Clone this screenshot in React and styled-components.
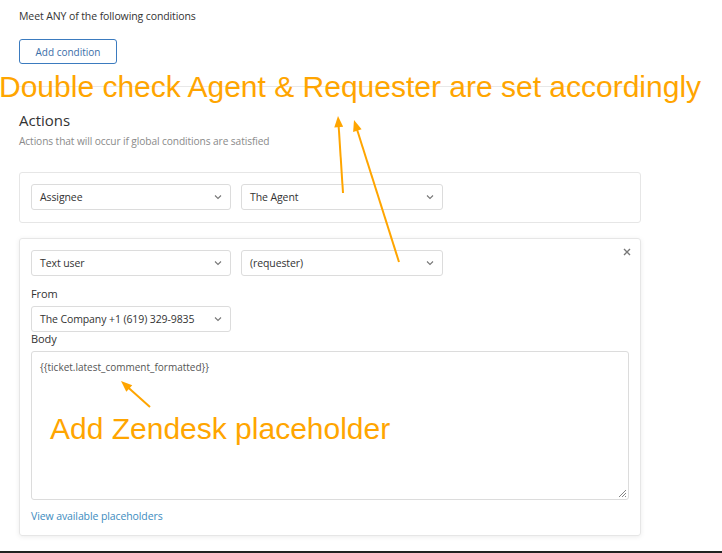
import React from 'react';
import styled, { createGlobalStyle } from 'styled-components';

const GlobalStyle = createGlobalStyle`
  html, body {
    margin: 0;
    padding: 0;
    background: #fff;
  }
  body {
    font-family: 'Open Sans', 'Noto Sans', sans-serif;
    color: #333;
  }
`;

const Screen = styled.div`
  position: relative;
  width: 722px;
  height: 553px;
  overflow: hidden;
`;

const Page = styled.div`
  width: 622px;
  padding: 9px 0 0 19px;
`;

const SmallText = styled.div`
  font-size: 10.5px;
  line-height: 14px;
  color: ${(props) => props.color || '#333'};
  letter-spacing: -0.1px;
`;

const OutlineButton = styled.button`
  display: block;
  margin-top: 16px;
  width: 98px;
  height: 25px;
  border: 1px solid #3b7bbf;
  border-radius: 3px;
  background: #fff;
  color: #3b6ea8;
  font-family: inherit;
  font-size: 10px;
  padding: 0;
`;

const Divider = styled.hr`
  margin: 22px 0 0;
  border: 0;
  border-top: 1px solid #e8e8e8;
`;

const SectionTitle = styled.h2`
  margin: 23px 0 0;
  font-size: 15px;
  line-height: 20px;
  font-weight: 400;
  color: #333;
`;

const Subtitle = styled(SmallText)`
  margin-top: 4px;
  font-size: 10.2px;
`;

const Card = styled.div`
  position: relative;
  margin-top: ${(props) => props.$gap}px;
  border: 1px solid #e6e6e6;
  border-radius: 3px;
  padding: 11px 11px 12px;
  box-shadow: ${(props) => (props.$raised ? '0 1px 5px rgba(0,0,0,0.08)' : 'none')};
`;

const Row = styled.div`
  display: flex;
  gap: 10px;
`;

const SelectBox = styled.div`
  box-sizing: border-box;
  display: flex;
  align-items: center;
  justify-content: space-between;
  width: ${(props) => props.$width || 200}px;
  height: 26px;
  padding: 0 8px 0 8px;
  border: 1px solid #dcdcdc;
  border-radius: 3px;
  background: #fff;
  font-size: 10.5px;
  color: #333;
  letter-spacing: -0.1px;
`;

const Label = styled(SmallText)`
  margin-top: ${(props) => props.$gap || 0}px;
  margin-bottom: 5px;
  font-size: 11px;
`;

const TextArea = styled.div`
  position: relative;
  box-sizing: border-box;
  height: 149px;
  border: 1px solid #dcdcdc;
  border-radius: 3px;
  padding: 8px 8px;
  font-size: 10px;
  line-height: 14px;
  color: #555;
`;

const Grip = styled.svg`
  position: absolute;
  right: 1px;
  bottom: 1px;
`;

const Link = styled.a`
  display: block;
  margin-top: 9px;
  font-size: 10.5px;
  line-height: 14px;
  color: #3d8cc0;
  text-decoration: none;
  letter-spacing: -0.1px;
`;

const CloseIcon = styled.svg`
  position: absolute;
  top: 9px;
  right: 9px;
`;

const BottomBar = styled.div`
  margin-top: 15px;
  height: 3px;
  background: #222;
`;

const Annotation = styled.div`
  position: absolute;
  left: ${(props) => props.$x}px;
  top: ${(props) => props.$y}px;
  font-family: 'Liberation Sans', Arial, sans-serif;
  font-size: 30px;
  line-height: 34px;
  color: #ffa500;
  white-space: nowrap;
`;

const Arrows = styled.svg`
  position: absolute;
  left: 0;
  top: 0;
  pointer-events: none;
`;

function Chevron() {
  return (
    <svg width="8" height="6" viewBox="0 0 8 6">
      <path d="M1 1.5 L4 4.5 L7 1.5" fill="none" stroke="#777" strokeWidth="1.1" />
    </svg>
  );
}

function Select({ value, width }) {
  return (
    <SelectBox $width={width}>
      <span>{value}</span>
      <Chevron />
    </SelectBox>
  );
}

function Arrow({ x1, y1, x2, y2 }) {
  const angle = Math.atan2(y2 - y1, x2 - x1);
  const len = 12;
  const spread = 0.38;
  const p1 = [x2 - len * Math.cos(angle - spread), y2 - len * Math.sin(angle - spread)];
  const p2 = [x2 - len * Math.cos(angle + spread), y2 - len * Math.sin(angle + spread)];
  const bx = x2 - (len - 2) * Math.cos(angle);
  const by = y2 - (len - 2) * Math.sin(angle);
  return (
    <g>
      <line x1={x1} y1={y1} x2={bx} y2={by} stroke="#ffa500" strokeWidth="2" />
      <polygon points={`${x2},${y2} ${p1[0]},${p1[1]} ${p2[0]},${p2[1]}`} fill="#ffa500" />
    </g>
  );
}

export default function App() {
  return (
    <Screen>
      <GlobalStyle />
      <Page>
        <SmallText>Meet ANY of the following conditions</SmallText>
        <OutlineButton>Add condition</OutlineButton>
        <Divider />
        <SectionTitle>Actions</SectionTitle>
        <Subtitle color="#8a8a8a">Actions that will occur if global conditions are satisfied</Subtitle>

        <Card $gap={24}>
          <Row>
            <Select value="Assignee" />
            <Select value="The Agent" width={202} />
          </Row>
        </Card>

        <Card $gap={15} $raised>
          <CloseIcon width="8" height="8" viewBox="0 0 8 8">
            <path d="M1 1 L7 7 M7 1 L1 7" stroke="#777" strokeWidth="1.4" />
          </CloseIcon>
          <Row>
            <Select value="Text user" />
            <Select value="(requester)" width={202} />
          </Row>
          <Label $gap={11}>From</Label>
          <Select value="The Company +1 (619) 329-9835" />
          <Label>Body</Label>
          <TextArea>
            {'{{ticket.latest_comment_formatted}}'}
            <Grip width="10" height="10" viewBox="0 0 10 10">
              <path d="M9 2 L2 9 M9 5 L5 9 M9 8 L8 9" stroke="#666" strokeWidth="0.8" />
            </Grip>
          </TextArea>
          <Link href="#">View available placeholders</Link>
        </Card>
      </Page>
      <BottomBar />

      <Annotation $x={-1} $y={70}>Double check Agent &amp; Requester are set accordingly</Annotation>
      <Annotation $x={50} $y={412}>Add Zendesk placeholder</Annotation>

      <Arrows width="722" height="553">
        <Arrow x1={343} y1={193} x2={338} y2={116} />
        <Arrow x1={399} y1={262} x2={354} y2={120} />
        <Arrow x1={150} y1={407} x2={121} y2={381} />
      </Arrows>
    </Screen>
  );
}
